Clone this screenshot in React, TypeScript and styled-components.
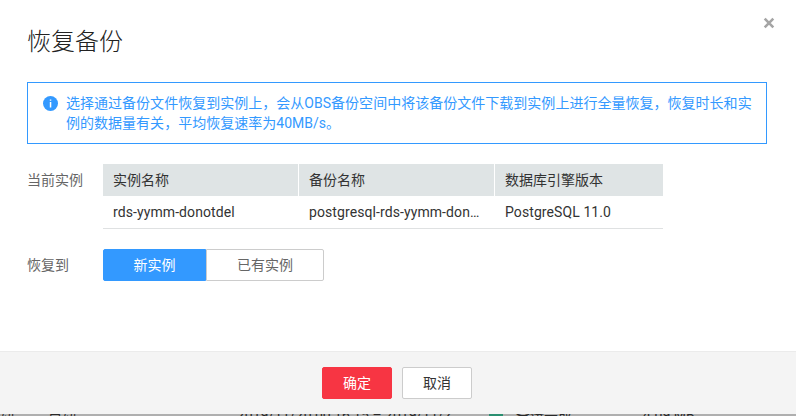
import React from "react";
import styled, { createGlobalStyle, css } from "styled-components";

const GlobalStyle = createGlobalStyle`
  * { box-sizing: border-box; }
  html, body { margin: 0; padding: 0; overflow: hidden; }
  body, button {
    font-family: Roboto, "Noto Sans CJK SC", sans-serif;
    font-size: 14px;
  }
`;

const Screen = styled.div`
  width: 796px;
  height: 416px;
  overflow: hidden;
  display: flex;
  flex-direction: column;
  background: #afafaf;
`;

const Dialog = styled.section`
  flex: none;
  height: 414px;
  display: flex;
  flex-direction: column;
  background: #fff;
`;

const Header = styled.header`
  height: 82px;
  padding: 16px 20px 0 27px;
  display: flex;
  justify-content: space-between;
  align-items: flex-start;
`;

const Title = styled.h1`
  margin: 8px 0 0;
  font-size: 24px;
  line-height: 36px;
  font-weight: 300;
  color: #222;
`;

const CloseButton = styled.button`
  padding: 0;
  border: 0;
  background: none;
  display: flex;
`;

const Body = styled.main`
  flex: 1;
  padding: 0 29px 0 27px;
`;

const Notice = styled.div`
  height: 62px;
  border: 1px solid #3399ff;
  padding: 10px 14px 0 15px;
  display: flex;
  gap: 8px;
  color: #3399ff;
  line-height: 20px;
`;

const InfoIcon = styled.svg`
  flex: none;
  margin-top: 3px;
`;

const NoticeText = styled.p`
  margin: 0;
  white-space: nowrap;
  letter-spacing: 0.02px;
`;

const Field = styled.div<{ $gap: number }>`
  display: grid;
  grid-template-columns: 76px 1fr;
  margin-top: ${(p) => p.$gap}px;
`;

const Label = styled.span`
  line-height: 32px;
  color: #666;
`;

const Table = styled.table`
  width: 560px;
  table-layout: fixed;
  border-collapse: separate;
  border-spacing: 0;
  color: #333;
  line-height: 32px;
`;

const cell = css`
  height: 32px;
  padding: 0 10px;
  text-align: left;
  font-weight: 400;
  overflow: hidden;
  text-overflow: ellipsis;
  white-space: nowrap;
`;

const HeadCell = styled.th<{ $width: number }>`
  ${cell}
  width: ${(p) => p.$width}px;
  background: #dfe4e5;
  border-right: 1px solid #fff;
  &:last-child { border-right: 0; }
`;

const Cell = styled.td`
  ${cell}
  height: 33px;
  border-bottom: 1px solid #dfe1e2;
  letter-spacing: 0.09px;
`;

const Segments = styled.div`
  display: flex;
`;

const Segment = styled.button<{ $active?: boolean }>`
  width: ${(p) => (p.$active ? 103 : 118)}px;
  height: 32px;
  padding: 0 0 2px;
  border: 1px solid ${(p) => (p.$active ? "#3399ff" : "#ccc")};
  border-radius: ${(p) => (p.$active ? "2px 0 0 2px" : "0 2px 2px 0")};
  background: ${(p) => (p.$active ? "#3399ff" : "#fff")};
  color: ${(p) => (p.$active ? "#fff" : "#666")};
`;

const Footer = styled.footer`
  height: 63px;
  padding: 15px 2px 0 0;
  display: flex;
  justify-content: center;
  gap: 10px;
  background: #f4f4f4;
  border-top: 1px solid #ebebeb;
`;

const ActionButton = styled.button<{ $primary?: boolean }>`
  width: 70px;
  height: 32px;
  padding: 0 0 2px;
  border-radius: 2px;
  border: 1px solid ${(p) => (p.$primary ? "#f73543" : "#ccc")};
  background: ${(p) => (p.$primary ? "#f73543" : "#fff")};
  color: ${(p) => (p.$primary ? "#fff" : "#333")};
`;

const PageRow = styled.div`
  flex: none;
  height: 2px;
  overflow: hidden;
  display: grid;
  grid-template-columns: 48px 189px 252px 27px 127px 1fr;
  color: #292929;
  line-height: 14px;
  white-space: nowrap;
`;

const PageCell = styled.span`
  height: 14px;
  margin-top: -6px;
`;

const StatusDot = styled.span`
  width: 14px;
  height: 14px;
  margin-top: -6px;
  border-radius: 50%;
  background: #2a8f70;
`;

export default function App() {
  return (
    <>
      <GlobalStyle />
      <Screen>
        <Dialog role="dialog" aria-label="恢复备份">
          <Header>
            <Title>恢复备份</Title>
            <CloseButton aria-label="关闭">
              <svg width="14" height="14" viewBox="0 0 14 14">
                <path d="M2.7 2.7 11.3 11.3M11.3 2.7 2.7 11.3" stroke="#a5a5a5" strokeWidth="2.6" />
              </svg>
            </CloseButton>
          </Header>
          <Body>
            <Notice>
              <InfoIcon width="15" height="15" viewBox="0 0 15 15">
                <circle cx="7.5" cy="7.5" r="7.5" fill="#3399ff" />
                <path d="M6.8 3.4h1.5v1.4H6.8zM6.8 6h1.5v5.6H6.8z" fill="#fff" />
              </InfoIcon>
              <NoticeText>
                选择通过备份文件恢复到实例上，会从OBS备份空间中将该备份文件下载到实例上进行全量恢复，恢复时长和实
                <br />
                例的数据量有关，平均恢复速率为40MB/s。
              </NoticeText>
            </Notice>
            <Field $gap={20}>
              <Label>当前实例</Label>
              <Table>
                <thead>
                  <tr>
                    <HeadCell $width={196}>实例名称</HeadCell>
                    <HeadCell $width={196}>备份名称</HeadCell>
                    <HeadCell $width={168}>数据库引擎版本</HeadCell>
                  </tr>
                </thead>
                <tbody>
                  <tr>
                    <Cell>rds-yymm-donotdel</Cell>
                    <Cell>postgresql-rds-yymm-donotdel</Cell>
                    <Cell>PostgreSQL 11.0</Cell>
                  </tr>
                </tbody>
              </Table>
            </Field>
            <Field $gap={20}>
              <Label>恢复到</Label>
              <Segments>
                <Segment $active>新实例</Segment>
                <Segment>已有实例</Segment>
              </Segments>
            </Field>
          </Body>
          <Footer>
            <ActionButton $primary>确定</ActionButton>
            <ActionButton>取消</ActionButton>
          </Footer>
        </Dialog>
        <PageRow>
          <PageCell>动</PageCell>
          <PageCell>自动</PageCell>
          <PageCell>2019/11/20 00:16:15 – 2019/11/2...</PageCell>
          <StatusDot />
          <PageCell>备份完成</PageCell>
          <PageCell>4.09 MB</PageCell>
        </PageRow>
      </Screen>
    </>
  );
}
